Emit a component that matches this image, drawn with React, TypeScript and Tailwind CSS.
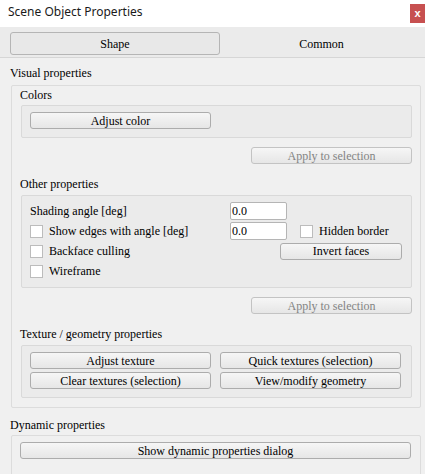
import type { ReactNode } from "react";

// Little win32-style "Scene Object Properties" panel

function Btn({ w, children, disabled }: { w: string; children: ReactNode; disabled?: boolean }) {
  return (
    <div
      className={`${w} h-[17px] rounded-[3px] border bg-gradient-to-b from-[#f6f6f6] to-[#e6e6e6] flex items-center justify-center leading-none ${
        disabled ? "border-[#c3c3c3] text-[#838383]" : "border-[#acacac] text-black"
      }`}
    >
      {children}
    </div>
  );
}

function Check() {
  return <div className="w-[13px] h-[13px] border border-[#bcbcbc] bg-white shrink-0" />;
}

function Field({ value }: { value: string }) {
  return (
    <div className="w-[57px] h-[18px] border border-[#b5b5b5] rounded-[2px] bg-white pl-[1px] flex items-center leading-none">
      {value}
    </div>
  );
}

function Label({ children, className = "" }: { children: ReactNode; className?: string }) {
  return <div className={`h-[18px] leading-[18px] ${className}`}>{children}</div>;
}

export default function App() {
  return (
    <div className="w-[425px] h-[474px] overflow-hidden bg-[#f0f0f0] text-[12px] text-black [font-family:Liberation_Serif,serif]">
      {/* Title bar */}
      <div className="h-[27px] bg-white flex items-start justify-between">
        <div className="pl-[8px] h-[24px] flex items-center [font-family:Noto_Sans,sans-serif] text-[12px] text-[#1a1a1a]">
          Scene Object Properties
        </div>
        <div className="mt-[4px] w-[15px] h-[19px] bg-[#c75050] text-white [font-family:Liberation_Sans,sans-serif] text-[11px] font-bold flex items-center justify-center leading-none">
          x
        </div>
      </div>

      {/* Tabs */}
      <div className="h-[31px] bg-[#ebebeb] border-b border-[#d6d6d6] pt-[5px] pl-[10px] flex items-start">
        <div className="w-[210px] h-[23px] rounded-[3px] border border-[#b5b5b5] bg-[#e8e8e8] flex items-center justify-center">
          Shape
        </div>
        <div className="flex-1 h-[23px] flex items-center justify-center pr-[2px]">Common</div>
      </div>

      <div className="pt-[7px]">
        <Label className="pl-[10px] -mt-[1px]">Visual properties</Label>
        <div className="mt-[3px] ml-[11px] w-[410px] border border-[#dcdcdc] rounded-[2px] pb-[9px]">
          <Label className="pl-[8px]">Colors</Label>
          <div className="mt-[1px] ml-[9px] w-[391px] h-[33px] border border-[#d9d9d9] bg-[#ebebeb] rounded-[2px] pt-[6px] pl-[8px]">
            <Btn w="w-[181px]">Adjust color</Btn>
          </div>
          <div className="mt-[9px] flex justify-end pr-[8px]">
            <Btn w="w-[161px]" disabled>
              Apply to selection
            </Btn>
          </div>

          <Label className="pl-[8px] mt-[11px]">Other properties</Label>
          <div className="mt-[2px] ml-[9px] w-[391px] h-[93px] border border-[#d9d9d9] bg-[#ebebeb] rounded-[2px] pt-[5px] pl-[8px]">
            <div className="h-[20px] flex items-center">
              <div className="w-[200px]">Shading angle [deg]</div>
              <Field value="0.0" />
            </div>
            <div className="h-[20px] flex items-center">
              <div className="w-[200px] flex items-center gap-[6px]">
                <Check />
                <span>Show edges with angle [deg]</span>
              </div>
              <Field value="0.0" />
              <div className="ml-[13px] flex items-center gap-[6px]">
                <Check />
                <span>Hidden border</span>
              </div>
            </div>
            <div className="h-[20px] flex items-center">
              <div className="w-[250px] flex items-center gap-[6px]">
                <Check />
                <span>Backface culling</span>
              </div>
              <Btn w="w-[122px]">Invert faces</Btn>
            </div>
            <div className="h-[20px] flex items-center">
              <div className="flex items-center gap-[6px]">
                <Check />
                <span>Wireframe</span>
              </div>
            </div>
          </div>
          <div className="mt-[9px] flex justify-end pr-[8px]">
            <Btn w="w-[161px]" disabled>
              Apply to selection
            </Btn>
          </div>

          <Label className="pl-[8px] mt-[11px]">Texture / geometry properties</Label>
          <div className="mt-[2px] ml-[9px] w-[391px] h-[53px] border border-[#d9d9d9] bg-[#ebebeb] rounded-[2px] pt-[6px] pl-[8px] grid grid-cols-[181px_181px] gap-x-[9px] gap-y-[3px] content-start">
            <Btn w="w-[181px]">Adjust texture</Btn>
            <Btn w="w-[181px]">Quick textures (selection)</Btn>
            <Btn w="w-[181px]">Clear textures (selection)</Btn>
            <Btn w="w-[181px]">View/modify geometry</Btn>
          </div>
        </div>

        <Label className="pl-[10px] mt-[8px]">Dynamic properties</Label>
        <div className="mt-[1px] ml-[11px] w-[410px] h-[60px] border border-[#dcdcdc] rounded-[2px] pt-[6px] pl-[8px]">
          <Btn w="w-[391px]">Show dynamic properties dialog</Btn>
        </div>
      </div>
    </div>
  );
}
